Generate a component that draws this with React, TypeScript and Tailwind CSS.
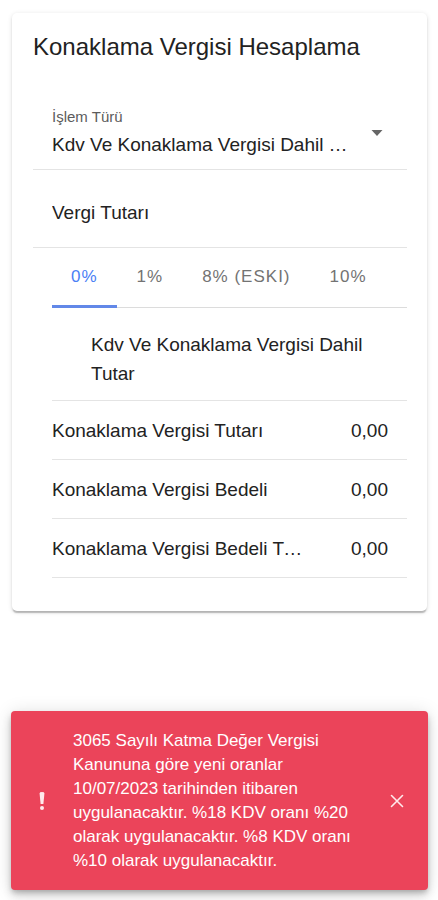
import { useState } from "react";

const RATES = ["0%", "1%", "8% (ESKI)", "10%"];

const RESULTS = [
  { label: "Konaklama Vergisi Tutarı", value: "0,00" },
  { label: "Konaklama Vergisi Bedeli", value: "0,00" },
  { label: "Konaklama Vergisi Bedeli Tutarı", value: "0,00" },
];

function OperationSelect() {
  return (
    <div className="flex items-center border-b border-[#e4e4e4] pt-11 pr-6 pb-[10px] pl-[19px]">
      <div className="flex min-w-0 flex-1 flex-col gap-1">
        <label htmlFor="operation" className="text-[15px] leading-5 text-[#5c5c5c]">
          İşlem Türü
        </label>
        <select
          id="operation"
          className="h-7 w-full appearance-none truncate bg-transparent text-[19px] leading-7 outline-none"
        >
          <option>Kdv Ve Konaklama Vergisi Dahil Tutar</option>
        </select>
      </div>
      <svg className="ml-4 h-[6px] w-3 shrink-0" viewBox="0 0 12 6" aria-hidden="true">
        <path d="M0.5 0h11L6 6z" fill="#666" />
      </svg>
    </div>
  );
}

function RateTabs() {
  const [active, setActive] = useState(0);
  return (
    <div role="tablist" className="ml-[19px] flex h-[60px] gap-px border-b border-[#dcdcdc]">
      {RATES.map((rate, i) => (
        <button
          key={rate}
          type="button"
          role="tab"
          aria-selected={i === active}
          onClick={() => setActive(i)}
          className={
            "-mb-px shrink-0 border-b-[3px] px-[19px] text-[17px] leading-6 tracking-[1px] whitespace-nowrap " +
            (i === active ? "border-[#6288e8] text-[#4a80f5]" : "border-transparent text-[#737373]")
          }
        >
          {rate}
        </button>
      ))}
    </div>
  );
}

function Notice() {
  return (
    <div
      role="alert"
      className="mr-[10px] ml-[11px] mt-[100px] flex items-center rounded-[4px] bg-[#eb445a] pt-[18px] pr-[19px] pb-[17px] pl-[21px] text-white shadow-[0_3px_5px_-1px_rgba(0,0,0,0.2),0_6px_10px_0_rgba(0,0,0,0.14),0_1px_18px_0_rgba(0,0,0,0.12)]"
    >
      <svg className="h-5 w-5 shrink-0" viewBox="0 0 20 20" fill="#ffe9ec" aria-hidden="true">
        <path d="M7.6 2.4Q7.5 1 10 1T12.4 2.4L11.4 13H8.6z" />
        <circle cx="10" cy="17" r="2" />
      </svg>
      <p className="mr-6 ml-[21px] min-w-0 flex-1 text-[17px] leading-6">
        3065 Sayılı Katma Değer Vergisi Kanununa göre yeni oranlar 10/07/2023 tarihinden itibaren
        uygulanacaktır. %18 KDV oranı %20 olarak uygulanacaktır. %8 KDV oranı %10 olarak
        uygulanacaktır.
      </p>
      <button type="button" aria-label="Kapat" className="shrink-0 p-1">
        <svg className="h-4 w-4" viewBox="0 0 16 16" aria-hidden="true">
          <path d="M2.5 2.5l11 11M13.5 2.5l-11 11" stroke="#ffe9ec" strokeWidth="1.6" strokeLinecap="round" />
        </svg>
      </button>
    </div>
  );
}

export default function App() {
  return (
    <main className="bg-white pt-[13px] pb-[10px] font-['Liberation_Sans',Arial,sans-serif] text-[#222]">
      <section className="mr-[11px] ml-3 rounded-[5px] bg-white pt-[18px] pr-5 pb-[33px] pl-[21px] shadow-[0_3px_1px_-1px_rgba(0,0,0,0.16),0_2px_2px_0_rgba(0,0,0,0.1),0_1px_5px_0_rgba(0,0,0,0.12)]">
        <h1 className="text-[24px] leading-8">Konaklama Vergisi Hesaplama</h1>
        <OperationSelect />
        <div className="border-b border-[#e4e4e4] px-[19px] pt-[29px] pb-5">
          <input
            type="text"
            inputMode="decimal"
            aria-label="Vergi Tutarı"
            placeholder="Vergi Tutarı"
            className="block h-7 w-full bg-transparent text-[19px] leading-7 outline-none placeholder:text-[#222] placeholder:opacity-100"
          />
        </div>
        <RateTabs />
        <div className="ml-[19px] text-[19px]">
          <h2 className="border-b border-[#e4e4e4] pt-[22px] pr-5 pb-3 pl-[39px] leading-[29px]">
            Kdv Ve Konaklama Vergisi Dahil Tutar
          </h2>
          <dl>
            {RESULTS.map(({ label, value }) => (
              <div
                key={label}
                className="flex justify-between gap-10 border-b border-[#e4e4e4] pt-4 pr-[19px] pb-[14px] leading-7"
              >
                <dt className="min-w-0 truncate">{label}</dt>
                <dd className="shrink-0">{value}</dd>
              </div>
            ))}
          </dl>
        </div>
      </section>
      <Notice />
    </main>
  );
}
